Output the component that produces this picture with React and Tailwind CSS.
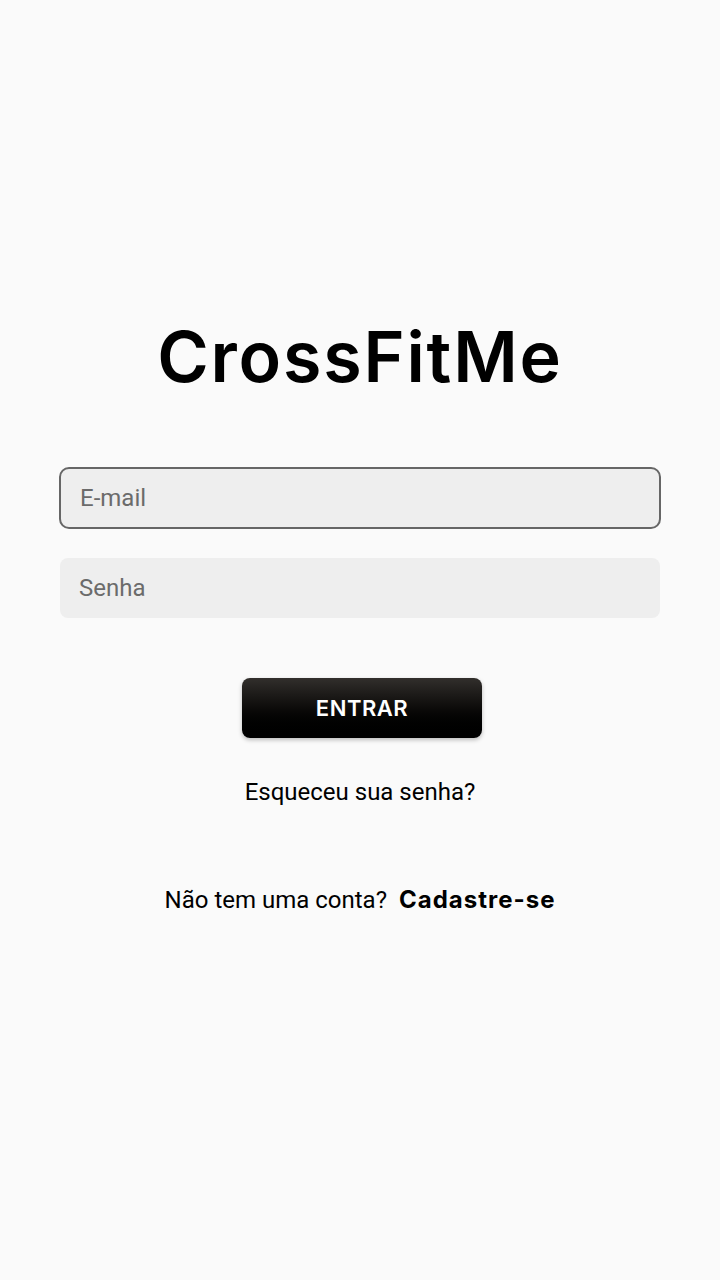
import React from 'react';

const roboto = { fontFamily: 'Roboto, "Liberation Sans", sans-serif' };

export default function App() {
  return (
    <div className="min-h-[1280px] w-full bg-[#fafafa] flex flex-col items-center font-['Roboto',_sans-serif]">
      <h1 className="mt-[314px] h-[84px] flex items-center text-[70px] font-semibold tracking-[1.8px] text-black font-['Inter',_sans-serif]">
        CrossFitMe
      </h1>

      <div className="mt-[69px] w-[602px] flex flex-col">
        <input
          placeholder="E-mail"
          className="h-[62px] w-full rounded-[10px] border-2 border-[#666666] bg-[#eeeeee] px-[19px] text-[24px] text-[#333] placeholder:text-[#6b6b6b] outline-none"
        />
        <input
          type="password"
          placeholder="Senha"
          className="mt-[29px] mx-[1px] h-[60px] rounded-[8px] bg-[#eeeeee] px-[19px] text-[24px] text-[#333] placeholder:text-[#6b6b6b] outline-none"
        />
      </div>

      <button className="mt-[60px] ml-[4px] h-[60px] w-[240px] rounded-[8px] bg-gradient-to-b from-[#322f2c] to-[#000000] shadow-[0_2px_4px_rgba(0,0,0,0.25)] text-white text-[22px] font-semibold tracking-[0.5px] font-['Inter',_sans-serif]">
        ENTRAR
      </button>

      <p className="mt-[36px] text-[24px] text-black" style={roboto}>
        Esqueceu sua senha?
      </p>

      <div className="mt-[72px] flex items-center gap-[12px] text-[24px] text-black">
        <span style={roboto}>Não tem uma conta?</span>
        <span className="font-bold tracking-[1px] font-['Inter',_sans-serif]">Cadastre-se</span>
      </div>
    </div>
  );
}
